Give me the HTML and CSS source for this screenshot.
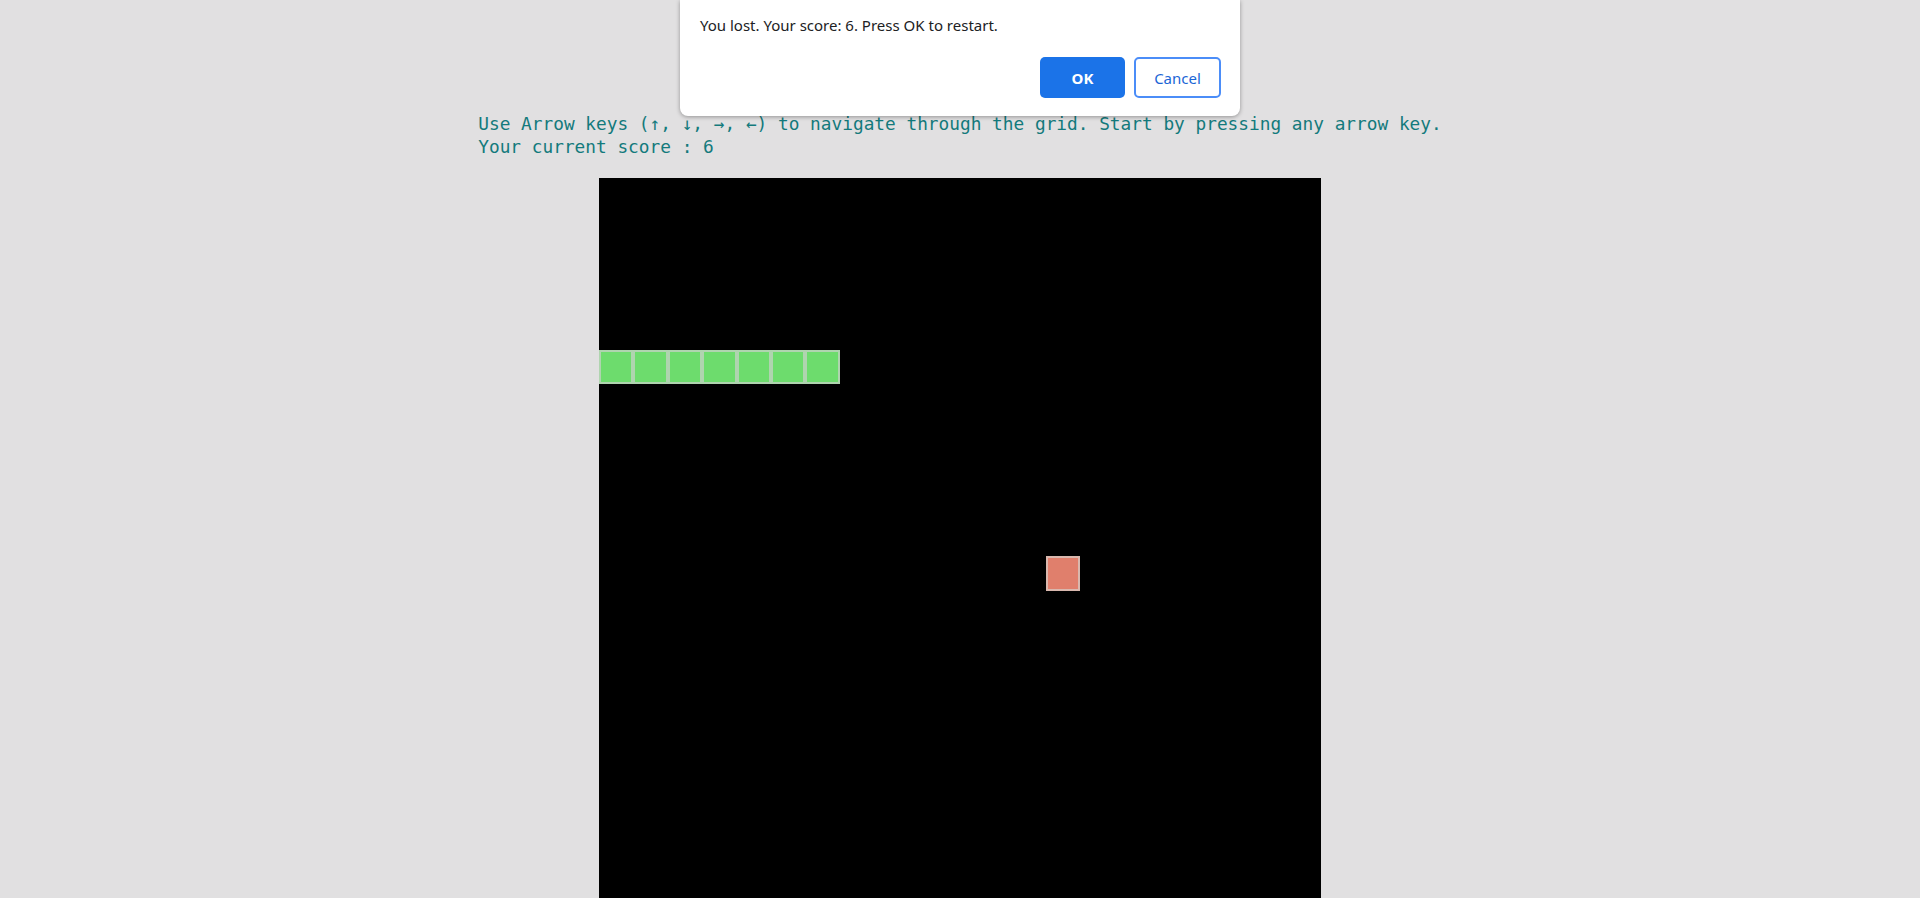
FILE: index.html
```html
<!DOCTYPE html>
<html>
<head>
<meta charset="utf-8">
<title>Snake</title>
<link rel="stylesheet" href="styles.css">
</head>
<body>
<main class="page">
  <div class="info">
    <div class="line">Use Arrow keys (↑, ↓, →, ←) to navigate through the grid. Start by pressing any arrow key.</div>
    <div class="line">Your current score : 6</div>
  </div>
  <div class="board">
    <div class="cell snake" style="grid-row:6;grid-column:1"></div>
    <div class="cell snake" style="grid-row:6;grid-column:2"></div>
    <div class="cell snake" style="grid-row:6;grid-column:3"></div>
    <div class="cell snake" style="grid-row:6;grid-column:4"></div>
    <div class="cell snake" style="grid-row:6;grid-column:5"></div>
    <div class="cell snake" style="grid-row:6;grid-column:6"></div>
    <div class="cell snake" style="grid-row:6;grid-column:7"></div>
    <div class="cell food" style="grid-row:12;grid-column:14"></div>
  </div>
</main>
<div class="dialog">
  <p class="dialog-msg">You lost. Your score: 6. Press OK to restart.</p>
  <div class="dialog-actions">
    <button class="btn btn-ok">OK</button>
    <button class="btn btn-cancel">Cancel</button>
  </div>
</div>
</body>
</html>
```
FILE: styles.css
```css
html, body {
  margin: 0;
  padding: 0;
  background: #e1e0e1;
  overflow: hidden;
}
.page {
  display: flex;
  flex-direction: column;
  align-items: center;
  padding-top: 112px;
}
.info {
  font-family: "DejaVu Sans Mono", "Liberation Mono", monospace;
  font-size: 17.8px;
  line-height: 23px;
  color: #137a7c;
  white-space: nowrap;
}
.board {
  margin-top: 20px;
  width: 722px;
  height: 722px;
  flex-shrink: 0;
  background: #000;
  display: grid;
  grid-template-columns: repeat(21, 1fr);
  grid-template-rows: repeat(21, 1fr);
}
.cell {
  box-sizing: border-box;
  border: 2px solid;
}
.snake {
  background: #6ddc6d;
  border-color: #afd4af;
}
.food {
  background: #e07f6c;
  border-color: #d9b8ae;
}
.dialog {
  position: absolute;
  top: 0;
  left: 680px;
  width: 560px;
  height: 116px;
  box-sizing: border-box;
  background: #fff;
  border-radius: 0 0 8px 8px;
  box-shadow: 0 1px 4px rgba(0,0,0,0.35);
  padding: 14px 19px 18px 20px;
  display: flex;
  flex-direction: column;
  justify-content: space-between;
  font-family: "Noto Sans", "Open Sans", sans-serif;
}
.dialog-msg {
  margin: 0;
  font-size: 15px;
  line-height: 22px;
  color: #202124;
}
.dialog-actions {
  display: flex;
  justify-content: flex-end;
  gap: 9px;
}
.btn {
  box-sizing: border-box;
  height: 41px;
  border-radius: 5px;
  font-family: "Noto Sans", "Open Sans", sans-serif;
  font-size: 15px;
  cursor: pointer;
}
.btn-ok {
  width: 85px;
  background: #1b73e8;
  color: #fff;
  border: none;
  font-weight: 700;
}
.btn-cancel {
  width: 87px;
  background: #fff;
  color: #1b66d6;
  border: 2px solid #4b8df8;
}
```
